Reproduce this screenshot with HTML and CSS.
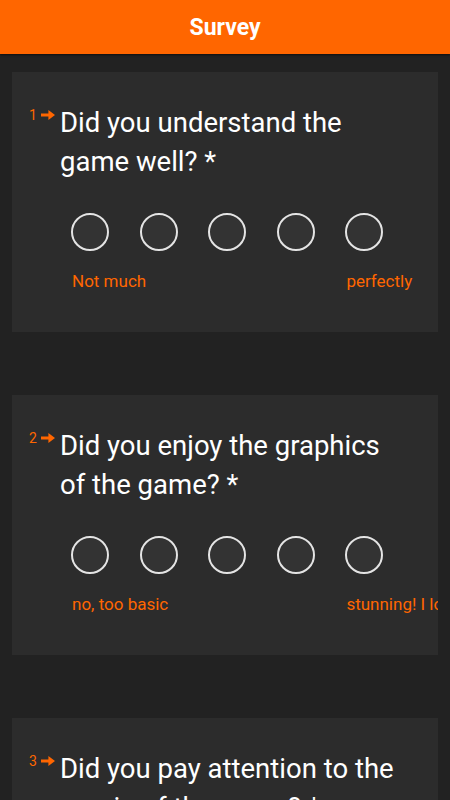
FILE: index.html
```html
<!DOCTYPE html>
<html lang="en">
<head>
<meta charset="utf-8">
<title>Survey</title>
<link rel="stylesheet" href="styles.css">
</head>
<body>
<header class="topbar"><h1 class="title">Survey</h1></header>
<main class="list">
  <section class="card">
    <div class="q-head">
      <div class="q-marker"><span class="q-num">1</span><svg class="q-arrow" viewBox="0 0 14 10" width="14" height="10"><path d="M0 3.6H7.4V0L14 5L7.4 10V6.4H0Z" fill="#ff6600"/></svg></div>
      <h2 class="q-text">Did you understand the game well? *</h2>
    </div>
    <div class="scale">
      <span class="dot"></span><span class="dot"></span><span class="dot"></span><span class="dot"></span><span class="dot"></span>
      <span class="lbl lbl-start">Not much</span>
      <span class="lbl lbl-end">perfectly</span>
    </div>
  </section>
  <section class="card">
    <div class="q-head">
      <div class="q-marker"><span class="q-num">2</span><svg class="q-arrow" viewBox="0 0 14 10" width="14" height="10"><path d="M0 3.6H7.4V0L14 5L7.4 10V6.4H0Z" fill="#ff6600"/></svg></div>
      <h2 class="q-text">Did you enjoy the graphics of the game? *</h2>
    </div>
    <div class="scale">
      <span class="dot"></span><span class="dot"></span><span class="dot"></span><span class="dot"></span><span class="dot"></span>
      <span class="lbl lbl-start">no, too basic</span>
      <span class="lbl lbl-end">stunning! I loved them</span>
    </div>
  </section>
  <section class="card">
    <div class="q-head">
      <div class="q-marker"><span class="q-num">3</span><svg class="q-arrow" viewBox="0 0 14 10" width="14" height="10"><path d="M0 3.6H7.4V0L14 5L7.4 10V6.4H0Z" fill="#ff6600"/></svg></div>
      <h2 class="q-text">Did you pay attention to the music of the game? *</h2>
    </div>
    <div class="scale">
      <span class="dot"></span><span class="dot"></span><span class="dot"></span><span class="dot"></span><span class="dot"></span>
      <span class="lbl lbl-start">not at all</span>
      <span class="lbl lbl-end">yes, a lot</span>
    </div>
  </section>
</main>
</body>
</html>
```

FILE: styles.css
```css
* { box-sizing: border-box; }
html, body { margin: 0; padding: 0; }
body {
  background: #222222;
  font-family: Roboto, "Liberation Sans", Arial, sans-serif;
  color: #ffffff;
  height: 800px;
  overflow: hidden;
}
.topbar {
  height: 54px;
  background: #ff6600;
  display: flex;
  align-items: center;
  justify-content: center;
  box-shadow: 0 1px 2px rgba(0,0,0,0.6);
  position: relative;
  z-index: 1;
}
.title {
  margin: 0;
  font-size: 23px;
  font-weight: 700;
  color: #ffffff;
  line-height: 1;
}
.list {
  padding: 18px 12px 0 12px;
  display: flex;
  flex-direction: column;
  gap: 63px;
}
.card {
  background: #2c2c2c;
  height: 260px;
  flex: none;
  overflow: hidden;
  padding: 31px 0 40px 17px;
}
.q-head {
  display: flex;
  align-items: flex-start;
}
.q-marker {
  display: flex;
  align-items: center;
  width: 31px;
  flex: none;
  padding-top: 5px;
}
.q-num {
  font-size: 14px;
  line-height: 14px;
  color: #ff6600;
  width: 12px;
}
.q-arrow {
  display: block;
}
.q-text {
  margin: 0;
  font-size: 27.5px;
  font-weight: 400;
  line-height: 39px;
  color: #ffffff;
  width: 345px;
}
.scale {
  display: grid;
  grid-template-columns: repeat(5, 38px);
  column-gap: 30.6px;
  row-gap: 20px;
  margin: 32px 0 0 42px;
}
.dot {
  width: 38px;
  height: 38px;
  border-radius: 50%;
  border: 2.5px solid #e4e4e4;
  background: #333333;
}
.lbl {
  font-size: 17px;
  line-height: 20px;
  color: #ff6600;
  white-space: nowrap;
  grid-row: 2;
  margin-left: 1px;
}
.lbl-start { grid-column: 1; }
.lbl-end { grid-column: 5; }
```
